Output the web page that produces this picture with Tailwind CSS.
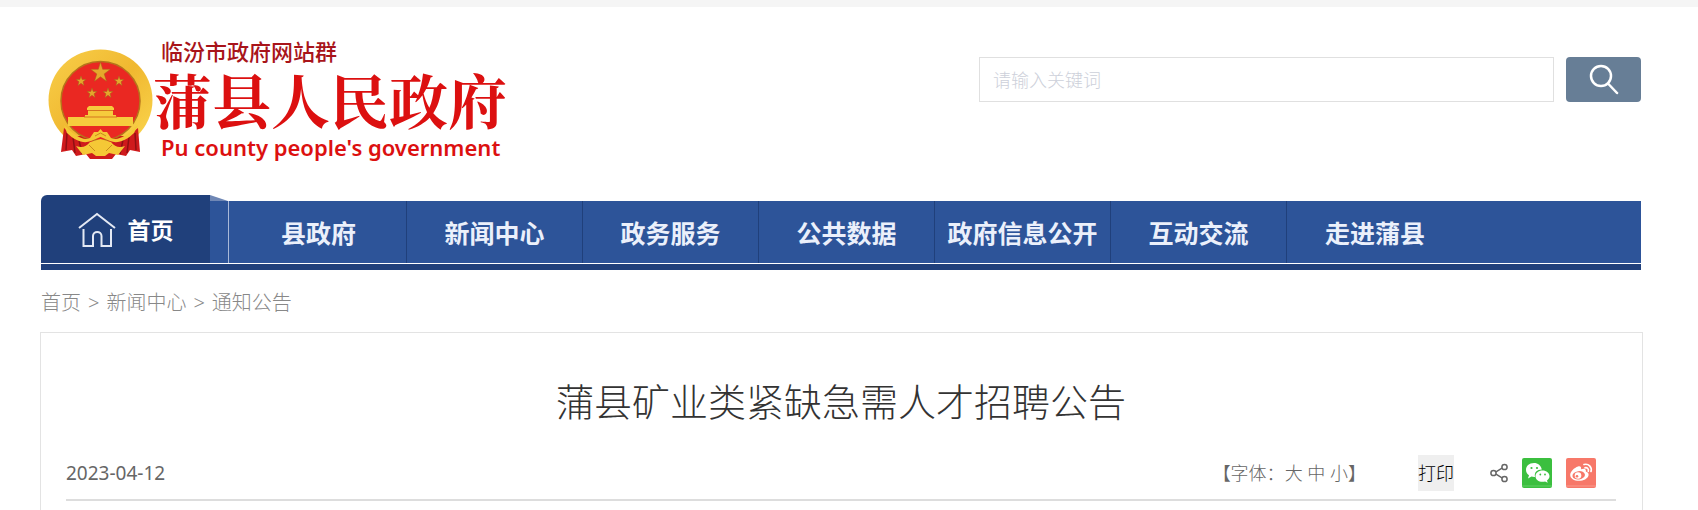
<!DOCTYPE html>
<html lang="zh-CN">
<head>
    <meta charset="UTF-8">
    <meta name="viewport" content="width=device-width, initial-scale=1.0">
    <script src="https://cdn.jsdelivr.net/npm/@tailwindcss/browser@4"></script>
    <title>蒲县矿业类紧缺急需人才招聘公告</title>
</head>

<body class="bg-white border-t-[7px] border-[#f5f5f5] font-['Noto_Sans','Noto_Sans_CJK_SC',sans-serif]">
    <div class="pl-[41px] pr-[57px]">

      <!-- header -->
      <header class="flex items-start justify-between pt-8 pl-[7px] h-47">
        <a href="#" class="flex items-start">
          <svg class="w-[105px] h-[112px] mt-2.5" viewBox="0 0 105 112" aria-hidden="true">
            <defs>
              <linearGradient id="gold" x1="0" y1="0" x2="1" y2="1">
                <stop offset="0" stop-color="#f8cf4a"/>
                <stop offset=".5" stop-color="#f0b830"/>
                <stop offset="1" stop-color="#fbd850"/>
              </linearGradient>
            </defs>
            <ellipse cx="52.500" cy="51" rx="52" ry="50.500" fill="url(#gold)"/>
            <path d="M16 79L13 103L24 101L28 107L38 105L42 110H64L68 105L78 107L82 101L92 103L90 79L80 87H26z" fill="#cf1a1c"/>
            <path d="M19 84L18 101M25 88L27 104M31 91L34 105M87 84L88 101M81 88L79 104M75 91L72 105" stroke="#8f1013" stroke-width="1.5"/>
            <circle cx="52.500" cy="52" r="39.500" fill="#ea2822" stroke="#b5731b" stroke-width="1.500"/>
            <path d="M16 76C28 88 36 92 42 89L46 83L50 83L52.500 80L55 83L59 83L63 89C69 92 78 88 90 76L86 84C78 92 69 95 62 92L52.500 88L43 92C36 95 27 92 19 84z" fill="#f5c836"/>
            <g fill="#e5a72c" stroke="#a5651c" stroke-width=".5">
              <path d="M52.500 13l2.200 7.300h7.600l-6.100 4.600 2.300 7.400-6-4.500-6 4.500 2.300-7.400-6.100-4.600h7.600z"/>
              <path id="s" d="M33 27l1.200 3.500h3.800l-3 2.300 1.100 3.700-3.100-2.200-3.100 2.200 1.100-3.700-3-2.300h3.800z"/>
              <use href="#s" x="38"/>
              <use href="#s" x="11" y="12"/>
              <use href="#s" x="27" y="12"/>
            </g>
            <path d="M39 59l2-2h23l2 2v2h-1v5h3v2h17v9H20v-9h17v-2h3v-5h-1z" fill="#f6cc3d"/>
            <path d="M40 61.500h25M36 68h33" stroke="#d5771f"/>
            <path d="M28 97c6 2 10 1 14-4l10.500-3L63 93c4 5 8 6 14 4l-7 9-9-2-4 3h-9l-4-3-9 2z" fill="#f5c836"/>
            <path d="M41 96l6 6M64 96l-6 6M47 87l5.500-3 5.500 3" fill="none" stroke="#c98a1e"/>
          </svg>
          <div class="whitespace-nowrap">
            <p class="text-[22px] leading-6 pl-2 font-medium text-[#a8141a]">临汾市政府网站群</p>
            <p class="text-[59px] leading-[72px] font-bold text-[#dc1010] font-['Noto_Serif_CJK_SC','Noto_Sans_CJK_SC',serif]">蒲县人民政府</p>
            <p class="text-[22px] leading-6 pl-2 font-semibold text-[#dc1010]">Pu county people's government</p>
          </div>
        </a>

        <form class="flex gap-3 pt-[18px]">
          <input type="text" aria-label="请输入关键词" placeholder="请输入关键词" class="w-[575px] h-[45px] border border-[#e0e0e0] px-[13px] text-[18px] placeholder:text-[#cdd0da] placeholder:font-light outline-none">
          <button type="button" aria-label="搜索" class="w-[75px] h-[45px] rounded bg-[#677e96] flex items-center justify-center">
            <svg class="w-8 h-8" viewBox="0 0 32 32" fill="none" stroke="#fff" stroke-width="2.500" stroke-linecap="round">
              <circle cx="13" cy="12" r="10"/>
              <path d="M20 19.500L29 29"/>
            </svg>
          </button>
        </form>
      </header>

      <!-- nav -->
      <nav class="flex items-end border-b-[6px] border-[#20407b] font-bold text-[#ebf0fb] text-[25px] whitespace-nowrap">
        <a href="#" class="w-[169px] h-[68px] mb-px pt-0.5 shrink-0 flex items-center justify-center gap-3 rounded-tl-md bg-[#20407b] text-white text-[23px]">
          <svg class="w-[38px] h-[36px]" viewBox="0 0 38 36" fill="none" stroke="#e4e9f4" stroke-width="2">
            <path d="M1 16L19 2L37 16"/>
            <path d="M5.500 17V34H15V24C15 18.500 23.500 18.500 23.500 24V34H33V17"/>
          </svg>
          首页
        </a>
        <svg class="w-[19px] h-[68px] mb-px shrink-0" viewBox="0 0 19 68" aria-hidden="true">
          <path d="M0 0L18 6H0z" fill="#6f87b5"/>
          <path d="M0 6H19V68H0z" fill="#2d5499"/>
          <path d="M18.500 6V68" stroke="#a9b9d8"/>
        </svg>
        <ul class="flex grow h-[62px] mb-px pl-0.5 bg-[#2d5499] leading-[64px] text-center">
          <li class="w-[176px] border-r border-[#20407b]"><a href="#">县政府</a></li>
          <li class="w-[176px] border-r border-[#20407b]"><a href="#">新闻中心</a></li>
          <li class="w-[176px] border-r border-[#20407b]"><a href="#">政务服务</a></li>
          <li class="w-[176px] border-r border-[#20407b]"><a href="#">公共数据</a></li>
          <li class="w-[176px] border-r border-[#20407b]"><a href="#">政府信息公开</a></li>
          <li class="w-[176px] border-r border-[#20407b]"><a href="#">互动交流</a></li>
          <li class="w-[176px]"><a href="#">走进蒲县</a></li>
        </ul>
      </nav>

      <!-- breadcrumb -->
      <div class="flex gap-[7px] h-[62px] pt-1 items-center text-xl font-light text-[#888]">
        <a href="#">首页</a><span>&gt;</span><a href="#">新闻中心</a><span>&gt;</span><a href="#">通知公告</a>
      </div>

      <!-- article -->
      <main class="-ml-px -mr-0.5 border border-b-0 border-[#e3e3e3] pl-[25px] pr-[26px] pt-[38px] pb-3">
        <h1 class="text-center text-[38px] leading-[60px] font-light text-[#333]">蒲县矿业类紧缺急需人才招聘公告</h1>
        <div class="mt-[18px] pb-0.5 h-[52px] flex items-center border-b-2 border-[#ddd] text-[18px] text-[#666]">
          <time class="text-[19px]">2023-04-12</time>
          <div class="ml-auto font-light">【字体：<a href="#">大</a> <a href="#">中</a> <a href="#">小</a>】</div>
          <button type="button" class="ml-13 h-9 bg-[#efefef] text-black font-light">打印</button>
          <div class="flex items-center gap-[14px] ml-9 mr-5">
            <a href="#" aria-label="分享">
              <svg class="w-[18px] h-5" viewBox="0 0 18 20" fill="none" stroke="#666" stroke-width="1.500">
                <circle cx="3.500" cy="10" r="2.600"/>
                <circle cx="14.500" cy="4" r="2.600"/>
                <circle cx="14.500" cy="16" r="2.600"/>
                <path d="M6 8.800L12 5.200M6 11.200L12 14.800"/>
              </svg>
            </a>
            <a href="#" aria-label="微信">
              <svg class="w-[30px] h-[30px]" viewBox="0 0 30 30">
                <rect width="30" height="30" rx="2" fill="#3bbf3f"/>
                <path d="M0 28h30" stroke="#62d066"/>
                <path d="M12 5C7 5 4 8 4 12c0 2.200 1.200 4 3 5.300L6 20.500l3.500-2c1 .3 2.300.5 3.500.4C12 14.500 15 11.500 19.800 11.500 19 7.500 16 5 12 5z" fill="#fff"/>
                <path d="M20.500 12.500c-4 0-7 2.500-7 5.700s3 5.600 7 5.600c.9 0 1.800-.1 2.600-.4l2.600 1.400-.7-2.400c1.500-1 2.500-2.500 2.500-4.200 0-3.200-3-5.700-7-5.700z" fill="#fff"/>
                <g fill="#3bbf3f"><circle cx="9.500" cy="10" r="1.100"/><circle cx="15" cy="10" r="1.100"/><circle cx="18.300" cy="16.500" r=".9"/><circle cx="23" cy="16.500" r=".9"/></g>
              </svg>
            </a>
            <a href="#" aria-label="微博">
              <svg class="w-[30px] h-[30px]" viewBox="0 0 30 30">
                <rect width="30" height="30" rx="2" fill="#f77869"/>
                <path d="M0 28h30" stroke="#fa9a8e"/>
                <path d="M12 8.500c2-.8 3.700.2 3 2.800 3-1.200 5.500-.6 4.800 2.200 2.200.7 3.200 2 2.700 4-.9 3.300-5 5.300-9.500 5.300-5 0-8.800-2.300-8.800-5.800 0-3.200 4-7.300 7.800-8.500z" fill="#fff"/>
                <ellipse cx="12.700" cy="17.300" rx="6.300" ry="4.200" fill="#f77869" transform="rotate(-8 12.700 17.300)"/>
                <circle cx="12" cy="17.500" r="3.300" fill="#fff"/>
                <circle cx="11" cy="18.200" r="1.300" fill="#f77869"/>
                <path d="M18 6.500c4.500-1.200 8.300 2.500 7 7M19 9.800c2.300-.5 4 1.300 3.300 3.500" fill="none" stroke="#fff" stroke-width="1.700" stroke-linecap="round"/>
              </svg>
            </a>
          </div>
        </div>
      </main>
    </div>
</body>

</html>
